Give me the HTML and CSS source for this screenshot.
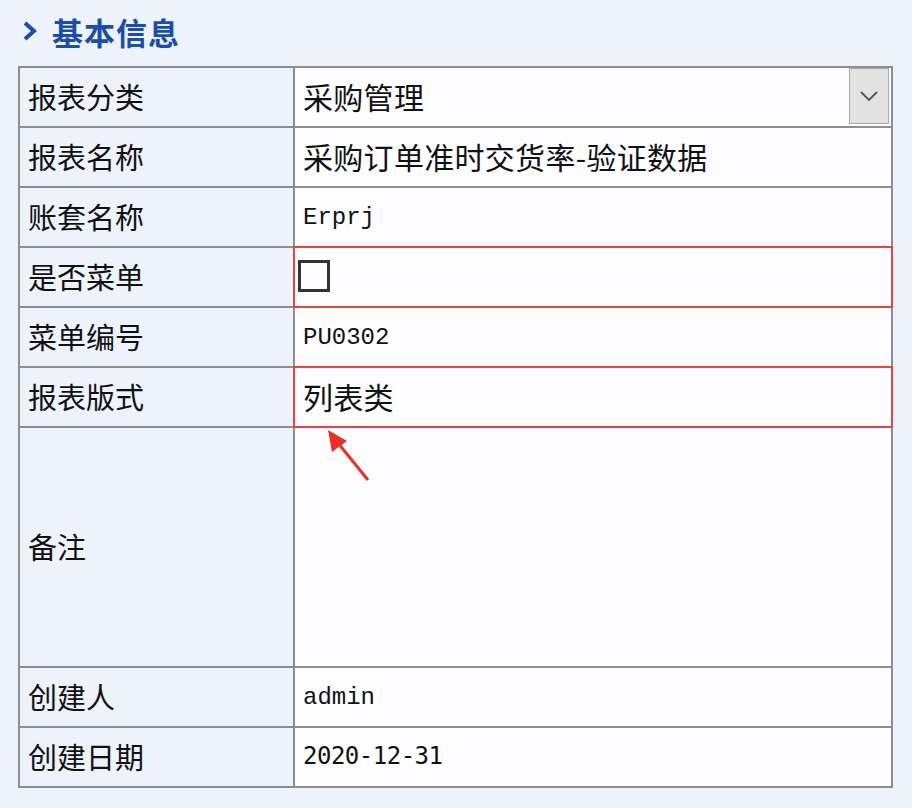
FILE: index.html
```html
<!DOCTYPE html>
<html>
<head lang="zh">
<meta charset="UTF-8">
<title>基本信息</title>
<link rel="stylesheet" href="styles.css">
</head>
<body>
<div class="panel">
  <h2 class="title">
    <svg class="chev" width="16" height="22" viewBox="0 0 16 22"><polyline points="3,3 12,11 3,19" fill="none" stroke="#1c4ea8" stroke-width="4"/></svg>
    基本信息
  </h2>

  <table class="info">
    <tr>
      <td class="label">报表分类</td>
      <td class="value">
        <div class="select">
          <span class="select-text">采购管理</span>
          <span class="drop">
            <svg width="20" height="12" viewBox="0 0 20 12"><polyline points="2,2 10,10 18,2" fill="none" stroke="#555" stroke-width="1.8"/></svg>
          </span>
        </div>
      </td>
    </tr>
    <tr>
      <td class="label">报表名称</td>
      <td class="value">采购订单准时交货率-验证数据</td>
    </tr>
    <tr>
      <td class="label">账套名称</td>
      <td class="value mono">Erprj</td>
    </tr>
    <tr>
      <td class="label">是否菜单</td>
      <td class="value mark"><span class="check"></span></td>
    </tr>
    <tr>
      <td class="label">菜单编号</td>
      <td class="value mono">PU0302</td>
    </tr>
    <tr>
      <td class="label">报表版式</td>
      <td class="value mark">列表类</td>
    </tr>
    <tr class="tall">
      <td class="label">备注</td>
      <td class="value"></td>
    </tr>
    <tr>
      <td class="label">创建人</td>
      <td class="value mono">admin</td>
    </tr>
    <tr>
      <td class="label">创建日期</td>
      <td class="value date">2020-12-31</td>
    </tr>
  </table>

  <!-- annotation arrow -->
  <svg class="arrow" width="60" height="60" viewBox="0 0 60 60">
    <line x1="48" y1="52" x2="18" y2="15" stroke="#e8302a" stroke-width="3"/>
    <polygon points="8,2 27,13 12,24" fill="#e8302a"/>
  </svg>
</div>
</body>
</html>
```

FILE: styles.css
```css
body {
  margin: 0;
  background-color: #eef3fb;
  font-family: "Noto Sans CJK SC", "Noto Sans", sans-serif;
  color: #111;
}

.panel {
  position: relative;
  padding: 10px 0 0 18px;
}

.title {
  display: flex;
  align-items: center;
  margin: 0 0 14px 0;
  height: 42px;
  font-size: 31px;
  font-weight: 700;
  color: #1c4ea8;
  letter-spacing: 1px;
}

.chev {
  margin: 0 14px 0 4px;
}

.info {
  border-collapse: collapse;
  width: 875px;
  border: 2px solid #7d7d7d;
}

.info tr {
  height: 60px;
}

.info tr.tall {
  height: 240px;
}

.info td {
  border: 2px solid #8e8e8e;
  padding: 0 8px 2px 8px;
  font-size: 29px;
  line-height: 1;
}

.label {
  width: 257px;
  background-color: #edf2fb;
}

.value {
  background-color: #fdfdff;
  font-size: 30px !important;
  letter-spacing: 0.3px;
}

.mono {
  font-family: "Liberation Mono", monospace;
  font-size: 24px !important;
  letter-spacing: 0;
  padding-top: 3px !important;
}

.date {
  font-family: "DejaVu Sans Mono", monospace;
  font-size: 24px !important;
  letter-spacing: -0.5px;
}

.mark {
  outline: 2px solid #e54540;
  outline-offset: -1px;
}

.check {
  display: block;
  width: 26px;
  height: 26px;
  border: 3px solid #333;
  margin-left: -5px;
}

.select {
  display: flex;
  align-items: center;
  justify-content: space-between;
  margin-right: -6px;
}

.drop {
  display: flex;
  align-items: center;
  justify-content: center;
  width: 38px;
  height: 54px;
  background-color: #e2e2e2;
  border: 1px solid #a9a9a9;
}

.arrow {
  position: absolute;
  left: 320px;
  top: 428px;
}
```
